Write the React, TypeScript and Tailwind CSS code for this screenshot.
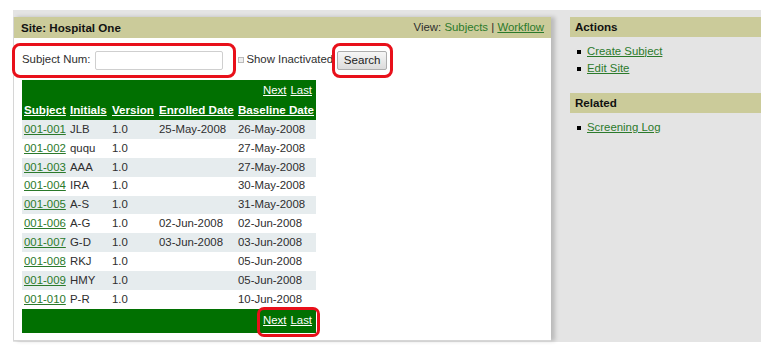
import React from 'react';

type Row = { id: string; initials: string; version: string; enrolled: string; baseline: string };

const rows: Row[] = [
  { id: '001-001', initials: 'JLB', version: '1.0', enrolled: '25-May-2008', baseline: '26-May-2008' },
  { id: '001-002', initials: 'ququ', version: '1.0', enrolled: '', baseline: '27-May-2008' },
  { id: '001-003', initials: 'AAA', version: '1.0', enrolled: '', baseline: '27-May-2008' },
  { id: '001-004', initials: 'IRA', version: '1.0', enrolled: '', baseline: '30-May-2008' },
  { id: '001-005', initials: 'A-S', version: '1.0', enrolled: '', baseline: '31-May-2008' },
  { id: '001-006', initials: 'A-G', version: '1.0', enrolled: '02-Jun-2008', baseline: '02-Jun-2008' },
  { id: '001-007', initials: 'G-D', version: '1.0', enrolled: '03-Jun-2008', baseline: '03-Jun-2008' },
  { id: '001-008', initials: 'RKJ', version: '1.0', enrolled: '', baseline: '05-Jun-2008' },
  { id: '001-009', initials: 'HMY', version: '1.0', enrolled: '', baseline: '05-Jun-2008' },
  { id: '001-010', initials: 'P-R', version: '1.0', enrolled: '', baseline: '10-Jun-2008' },
];

const cols = 'grid grid-cols-[46px_42px_47px_79px_80px]';

function Pager() {
  return (
    <div className="flex justify-end gap-[4px] pr-[4px] text-white underline">
      <span>Next</span>
      <span>Last</span>
    </div>
  );
}

function SideLink({ label }: { label: string }) {
  return (
    <li className="flex items-center h-[17px]">
      <span className="w-[4px] h-[4px] bg-black ml-[7px] mr-[6px]" />
      <a className="text-[#2b7a2b] underline">{label}</a>
    </li>
  );
}

export default function App() {
  return (
    <div
      className="relative w-[782px] h-[351px] bg-white pt-[10px] pl-[13px] text-[11.4px] text-[#2e2e2e] leading-none"
      style={{ fontFamily: '"Liberation Sans", Arial, sans-serif' }}
    >
      <div className="flex w-[748px] h-[332px] bg-[#e4e4e4] pt-[7px]">
        {/* main panel */}
        <div className="w-[538px] h-[324px] bg-white border-l border-b border-[#d6d6d6] shadow-[4px_0_4px_rgba(0,0,0,0.18)]">
          <div className="flex items-center justify-between h-[21px] bg-[#cbcb9a] pl-[7px] pr-[7px]">
            <span className="font-bold text-[11.6px] text-[#111]">Site: Hospital One</span>
            <span>
              View: <span className="text-[#2b7a2b]">Subjects</span> | <span className="text-[#2b7a2b] underline">Workflow</span>
            </span>
          </div>

          <div className="pl-[8px]">
            <div className="flex items-center h-[20px] mt-[12px]">
              <span>Subject Num:</span>
              <input className="ml-[5px] w-[128px] h-[19px] border border-[#cfcfcf] rounded-[2px] bg-white" />
              <span className="ml-[15px] w-[6px] h-[6px] border border-[#bbb] bg-[#eee]" />
              <span className="ml-[2px]">Show Inactivated</span>
              <button className="ml-[4px] w-[50px] h-[19px] border border-[#adadad] rounded-[2px] bg-gradient-to-b from-[#f6f6f6] to-[#dcdcdc] text-[#222] text-[11.6px]">
                Search
              </button>
            </div>

            <div className="mt-[10px] w-[294px]">
              <div className="bg-[#017001] h-[20px] flex items-center justify-end pt-[2px]">
                <Pager />
              </div>
              <div className={`${cols} bg-[#017001] h-[20px] items-center text-white font-bold underline text-[11.6px]`}>
                <span className="pl-[2px]">Subject</span>
                <span className="pl-[2px]">Initials</span>
                <span className="pl-[2px]">Version</span>
                <span className="pl-[2px]">Enrolled Date</span>
                <span className="pl-[2px]">Baseline Date</span>
              </div>
              {rows.map((r, i) => (
                <div
                  key={r.id}
                  className={`${cols} h-[18.9px] items-center ${i % 2 === 0 ? 'bg-[#e6ecee]' : 'bg-white'}`}
                >
                  <a className="pl-[2px] text-[#2b7a2b] underline">{r.id}</a>
                  <span className="pl-[2px]">{r.initials}</span>
                  <span className="pl-[2px]">{r.version}</span>
                  <span className="pl-[2px]">{r.enrolled}</span>
                  <span className="pl-[2px]">{r.baseline}</span>
                </div>
              ))}
              <div className="bg-[#017001] h-[24px] flex items-center justify-end">
                <Pager />
              </div>
            </div>
          </div>
        </div>

        {/* sidebar */}
        <div className="flex-1 pl-[19px]">
          <div className="h-[20px] bg-[#cbcb9a] flex items-center pl-[5px] font-bold text-[11.6px] text-[#111]">Actions</div>
          <ul className="mt-[6px]">
            <SideLink label="Create Subject" />
            <SideLink label="Edit Site" />
          </ul>
          <div className="mt-[16px] h-[20px] bg-[#cbcb9a] flex items-center pl-[5px] font-bold text-[11.6px] text-[#111]">Related</div>
          <ul className="mt-[6px]">
            <SideLink label="Screening Log" />
          </ul>
        </div>
      </div>

      {/* red annotation boxes */}
      <div className="absolute left-[12px] top-[43px] w-[224px] h-[35px] border-[3px] border-[#e8101a] rounded-[8px]" />
      <div className="absolute left-[332px] top-[43px] w-[61px] h-[35px] border-[3px] border-[#e8101a] rounded-[8px]" />
      <div className="absolute left-[257px] top-[307px] w-[63px] h-[30px] border-[3px] border-[#e8101a] rounded-[7px]" />
    </div>
  );
}
